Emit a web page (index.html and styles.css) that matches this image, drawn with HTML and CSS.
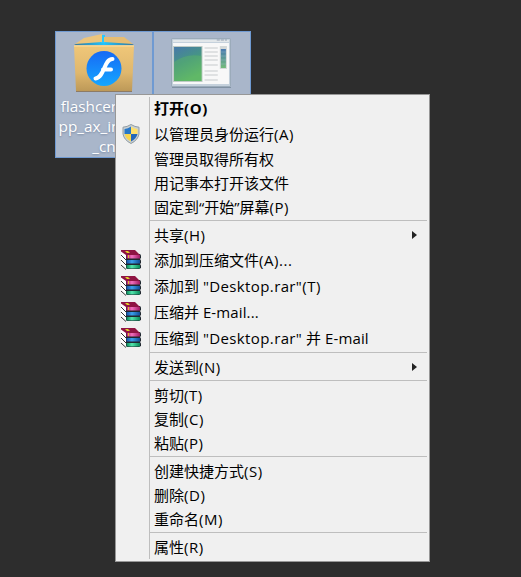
FILE: index.html
```html
<!DOCTYPE html>
<html lang="zh-CN">
<head>
<meta charset="utf-8">
<title>Desktop</title>
<link rel="stylesheet" href="styles.css">
</head>
<body>
<svg width="0" height="0" class="defs">
  <defs>
    <linearGradient id="spineRed"><stop offset="0" stop-color="#b81868"/><stop offset=".4" stop-color="#f070bd"/><stop offset="1" stop-color="#a01860"/></linearGradient>
    <linearGradient id="spineBlue"><stop offset="0" stop-color="#1450a8"/><stop offset=".4" stop-color="#3ba0ea"/><stop offset="1" stop-color="#104c98"/></linearGradient>
    <linearGradient id="spineGreen"><stop offset="0" stop-color="#088858"/><stop offset=".4" stop-color="#52e5ac"/><stop offset="1" stop-color="#088858"/></linearGradient>
    <symbol id="books" viewBox="0 0 20 20">
      <path d="M0 1l5 4v15l-5-5z" fill="#fff"/>
      <path d="M0 5l5 5M0 10l5 5M0 15l5 4.500" stroke="#333" fill="none"/>
      <path d="M5 4h14q1 1 1 2v2l-1 1q1 1 1 2v2l-1 1q1 1 1 2v2l-2 1H6l-1-1z" fill="#202830"/>
      <path d="M0 0h14l5 5H5L0 1.500z" fill="#8f1443"/>
      <path d="M4 1h3l2 2H6z" fill="#e5d128"/>
      <path d="M5.500 5H19v3.500H5.500z" fill="url(#spineRed)"/>
      <path d="M5.500 10H19v3.500H5.500z" fill="url(#spineBlue)"/>
      <path d="M5.500 15H19v3.500H5.500z" fill="url(#spineGreen)"/>
      <path d="M7 5h1v3H7z" fill="#d6c42b"/>
    </symbol>
  </defs>
</svg>
<main class="desktop">
  <div class="shortcut">
    <svg class="package" width="62" height="60" viewBox="0 0 62 60">
      <defs>
        <linearGradient id="box" x2="0" y2="1"><stop stop-color="#f0c779"/><stop offset=".6" stop-color="#dfb76d"/><stop offset="1" stop-color="#bd9958"/></linearGradient>
        <linearGradient id="disc" x2="0" y2="1"><stop stop-color="#1769f5"/><stop offset="1" stop-color="#15a7ff"/></linearGradient>
        <linearGradient id="glow"><stop stop-color="#3c7795"/><stop offset=".5" stop-color="#20c4ff"/><stop offset="1" stop-color="#3c7795"/></linearGradient>
      </defs>
      <path d="M1 12L12 6h38l11 6z" fill="url(#glow)"/>
      <path d="M28 2h4v8h-4z" fill="#29c9ff"/>
      <path d="M2 11L11 5l18-4v8z" fill="#ecc57c"/>
      <path d="M31 9V4h20l9 7z" fill="#e6bd73"/>
      <path d="M1 12.500h60l-2 45.500H3z" fill="url(#box)"/>
      <path d="M1 13h60" stroke="#ffdf96"/><path d="M3 58.500h56" stroke="#8d7b65"/>
      <circle cx="31" cy="35.500" r="17.500" fill="url(#disc)"/>
      <path d="M39.500 26c-9 0-7.500 18-17 19.500M30 36.500h8" fill="none" stroke="#fff" stroke-width="4" stroke-linecap="round"/>
    </svg>
    <span class="label">flashcenter_<br>pp_ax_install<br>_cn</span>
  </div>
  <div class="shortcut program">
    <svg width="60" height="50" viewBox="0 0 59 50" preserveAspectRatio="none">
      <defs>
        <linearGradient id="pane" x2=".4" y2="1"><stop stop-color="#4778a9"/><stop offset=".5" stop-color="#469486"/><stop offset="1" stop-color="#5fb66b"/></linearGradient>
        <linearGradient id="bar" x2="0" y2="1"><stop stop-color="#4979b0"/><stop offset="1" stop-color="#72bb79"/></linearGradient>
      </defs>
      <rect x=".5" y=".5" width="58" height="48" rx="1" fill="#c5d1dc" stroke="#9babba"/>
      <path d="M2 2h55v2H2z" fill="#e2e7ea"/><path d="M45 2h10" stroke="#93a0b0" stroke-dasharray="3 1"/>
      <path d="M2 5h55v41H2z" fill="#f8f8f8"/>
      <path d="M2 8h29v36H2z" fill="#bfcbc5"/><path d="M3 9h27v34H3z" fill="url(#pane)"/>
      <path d="M3 24q12-9 27-6v25H3z" fill="#60bb62" opacity=".38"/>
      <path d="M33 10h13M33 14h13M33 18h13M33 22h13M33 27h13M33 33h13M33 37h13M33 42h13" stroke="#dfe1e2" stroke-width="2"/>
      <path d="M48 8h7v23h-7z" fill="#d3d8d8"/><path d="M49 11h5v19h-5z" fill="url(#bar)"/>
      <path d="M49 14h5M49 18h5M49 22h5M49 26h5" stroke="#a6c4d6" opacity=".35"/>
      <path d="M1 49.500h58" stroke="#8091a2"/>
    </svg>
  </div>

  <nav class="menu">
    <div class="item default"><span>打开<span class="key">(O)</span></span></div>
    <div class="item with-icon">
      <svg class="shield" width="18" height="20" viewBox="0 0 18 20">
        <path d="M9 .5Q5 3 1 3.200V10q1 6 8 9.500Q16 16 17 10V3.200Q13 3 9 .5z" fill="#c9d0d4" stroke="#929da3"/>
        <path d="M9 2.500Q6 4.500 2.500 5v5H9z" fill="#2878c8"/><path d="M9 2.500Q12 4.500 15.500 5v5H9z" fill="#ffe06a"/>
        <path d="M2.500 10H9v7.500Q3.500 14.500 2.500 10z" fill="#f9d54e"/><path d="M9 10h6.500Q14.500 14.500 9 17.500z" fill="#2467b9"/>
      </svg><span>以管理员身份运行<span class="key">(A)</span></span></div>
    <div class="item"><span>管理员取得所有权</span></div>
    <div class="item"><span>用记事本打开该文件</span></div>
    <div class="item"><span>固定到“开始”屏幕<span class="key">(P)</span></span></div>
    <div class="separator"></div>
    <div class="item submenu"><span>共享<span class="key">(H)</span></span></div>
    <div class="item with-icon"><svg class="books" width="20" height="20"><use href="#books"/></svg><span>添加到压缩文件<span class="key">(A)...</span></span></div>
    <div class="item with-icon"><svg class="books" width="20" height="20"><use href="#books"/></svg><span>添加到 <span class="file">"Desktop.rar"</span><span class="key">(T)</span></span></div>
    <div class="item with-icon"><svg class="books" width="20" height="20"><use href="#books"/></svg><span>压缩并 <span class="mail">E-mail...</span></span></div>
    <div class="item with-icon"><svg class="books" width="20" height="20"><use href="#books"/></svg><span>压缩到 <span class="file">"Desktop.rar"</span> 并 <span class="mail">E-mail</span></span></div>
    <div class="separator"></div>
    <div class="item submenu"><span>发送到<span class="key">(N)</span></span></div>
    <div class="separator"></div>
    <div class="item"><span>剪切<span class="key">(T)</span></span></div>
    <div class="item"><span>复制<span class="key">(C)</span></span></div>
    <div class="item"><span>粘贴<span class="key">(P)</span></span></div>
    <div class="separator"></div>
    <div class="item"><span>创建快捷方式<span class="key">(S)</span></span></div>
    <div class="item"><span>删除<span class="key">(D)</span></span></div>
    <div class="item"><span>重命名<span class="key">(M)</span></span></div>
    <div class="separator"></div>
    <div class="item"><span>属性<span class="key">(R)</span></span></div>
  </nav>
</main>
</body>
</html>
```
FILE: styles.css
```css
* { box-sizing: border-box; }
body { margin: 0; background: #2d2d2d; overflow: hidden; font-family: "Open Sans", "Noto Sans CJK SC", sans-serif; }
.defs { display: block; height: 0; }
.desktop { position: relative; display: flex; align-items: flex-start; height: 577px; padding: 31px 0 0 55px; }
.shortcut { width: 98px; height: 127px; border: 1px solid #6f9ad2; background: #a9b6ca; display: flex; flex-direction: column; align-items: center; padding-top: 1px; }
.program { padding: 6px 2px 0 0; }
.package { flex: none; }
.label { margin-top: 3px; color: #fff; font-size: 15.3px; line-height: 20px; text-align: center; white-space: nowrap; text-shadow: 0 1px 2px #7888a1; }
.menu { position: absolute; left: 115px; top: 94px; width: 315px; height: 468px; padding: 2px; border: 1px solid #979797; background: linear-gradient(#bebebe, #bebebe) 33px 2px / 1px 462px no-repeat #f0f0f0; font-size: 15px; color: #000; }
.item { position: relative; display: flex; align-items: center; height: 24px; padding-left: 36px; line-height: 24px; white-space: pre; }
.with-icon { height: 26px; }
.default { font-weight: 700; padding-bottom: 2px; }
.key { letter-spacing: .55px; }
.file { letter-spacing: .38px; }
.mail { letter-spacing: .12px; }
.separator { height: 1px; margin: 1px 0 2px 32px; background: #bebebe; }
.shield { margin: 0 14px 0 -32px; }
.books { margin: 0 13px 0 -33px; }
.submenu::after { content: ""; margin: -1px 10px 0 auto; border: 4px solid transparent; border-left: 5px solid #222; border-right: 0; }
```
